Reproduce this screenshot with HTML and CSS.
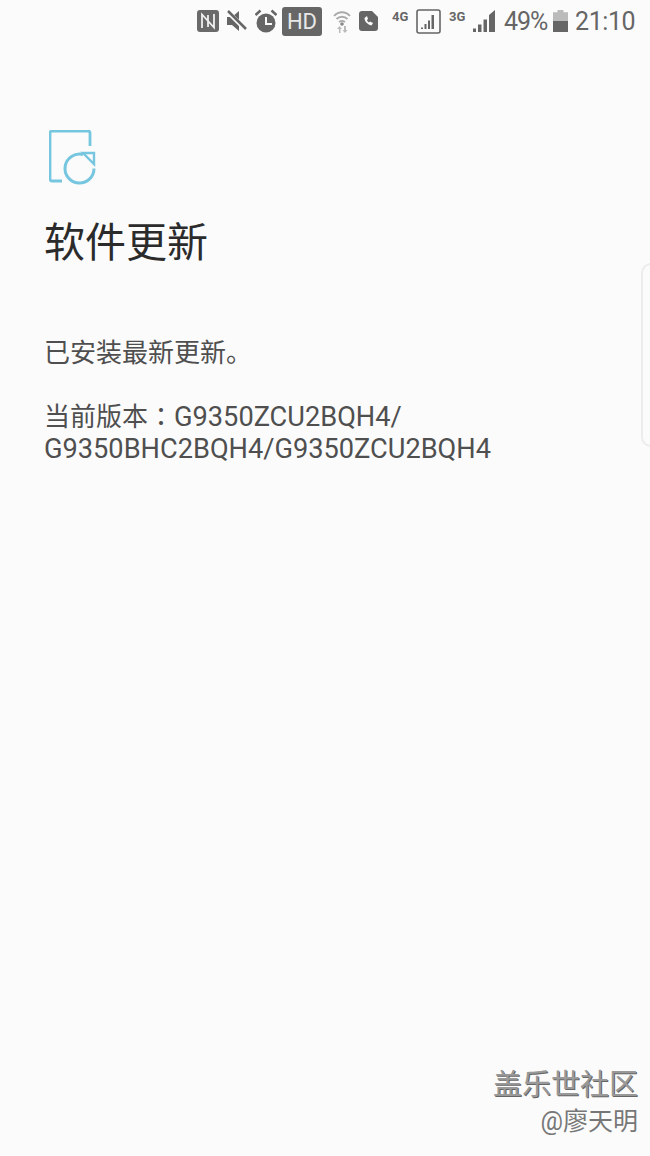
FILE: index.html
```html
<!DOCTYPE html>
<html lang="zh-CN">
<head>
  <meta name="viewport" content="width=device-width, initial-scale=1.0" />
  <title>软件更新</title>
  <link rel="stylesheet" href="styles.css">
</head>
<body>
  <div class="screen">
    <!-- Status bar -->
    <div class="status-bar">
      <svg class="ic ic-nfc" width="22" height="22" viewBox="0 0 22 22">
        <rect x="0" y="0" width="22" height="22" rx="3" fill="#6a6a6a"/>
        <path d="M5 18V4.500L11 11V5M17 4v13.500L11 11v6" fill="none" stroke="#f0f0f0" stroke-width="1.800"/>
      </svg>
      <svg class="ic ic-mute" width="20" height="22" viewBox="0 0 20 22">
        <path d="M0 7h5l7-6v20l-7-6H0z" fill="#666"/>
        <path d="M1 2l18 18" stroke="#fbfbfb" stroke-width="4.500"/>
        <path d="M1 1l18 18" stroke="#666" stroke-width="2.500"/>
      </svg>
      <svg class="ic ic-alarm" width="22" height="24" viewBox="0 0 22 24">
        <circle cx="11" cy="14" r="9.500" fill="#666"/>
        <path d="M0.500 6l5-4.500M21.500 6l-5-4.500" stroke="#666" stroke-width="2.500"/>
        <path d="M11 8v7h6" fill="none" stroke="#fbfbfb" stroke-width="2"/>
      </svg>
      <span class="hd">HD</span>
      <svg class="ic ic-wifi" width="18" height="23" viewBox="0 0 18 23">
        <path d="M1 6c4.500-5 11.500-5 16 0M3.500 9c3-3 8-3 11 0M6 12c2-1.500 4-1.500 6 0" fill="none" stroke="#aaa" stroke-width="1.800"/>
        <circle cx="9" cy="14" r="1.800" fill="#888"/>
        <path d="M6 23v-4H4l2.500-3 2.500 3H7.500v4zM11 16v4H9.500l2.500 3 2.500-3H13v-4z" fill="#bbb"/>
      </svg>
      <svg class="ic ic-call" width="19" height="20" viewBox="0 0 19 20">
        <path d="M3 0h10l6 6v11a3 3 0 0 1-3 3H3a3 3 0 0 1-3-3V3a3 3 0 0 1 3-3z" fill="#666"/>
        <path d="M5.500 7c0 3.500 3 6.500 7 7.500l1.500-2.500-3-1.500-1 1c-1-.5-1.800-1.500-2-2.500l1-1L8 5z" fill="#fbfbfb"/>
      </svg>
      <span class="net net-4g">4G</span>
      <svg class="ic ic-sim" width="25" height="25" viewBox="0 0 25 25">
        <rect x="1" y="1" width="23" height="23" rx="2" fill="none" stroke="#666" stroke-width="1.600"/>
        <path d="M5 18.500h2v1.500H5zM8.500 15h2v5h-2zM12 11.500h2V20h-2zM15.500 6h2.500v14h-2.500z" fill="#666"/>
      </svg>
      <span class="net net-3g">3G</span>
      <svg class="ic ic-signal" width="22" height="22" viewBox="0 0 22 22">
        <path d="M0 18.500h3V22H0zM5 14.500h3.500V22H5zM10.500 9.500H14V22h-3.500zM16 5l6-5v22h-6z" fill="#666"/>
      </svg>
      <span class="battery-text">49%</span>
      <span class="battery"><span class="battery-fill"></span></span>
      <span class="clock">21:10</span>
    </div>

    <!-- Page content -->
    <div class="content">
      <svg class="update-icon" width="48" height="56" viewBox="0 0 48 56">
        <path d="M13 51H3a2 2 0 0 1-2-2V3a2 2 0 0 1 2-2h36a2 2 0 0 1 2 2v13" fill="none" stroke="#77c6df" stroke-width="2.800"/>
        <path d="M34 24.500A14.500 14.500 0 1 0 45 38.500" fill="none" stroke="#77c6df" stroke-width="3"/>
        <path d="M34 23h11v11z" fill="none" stroke="#77c6df" stroke-width="2.400"/>
      </svg>
      <h1 class="title">软件更新</h1>
      <p class="installed">已安装最新更新。</p>
      <p class="version">当前版本<span class="colon" lang="zh-TW">：</span><span class="latin">G9350ZCU2BQH4/<br>G9350BHC2BQH4/G9350ZCU2BQH4</span></p>
    </div>

    <div class="side-handle"></div>

    <div class="watermark">
      <div class="wm-name">盖乐世社区</div>
      <div class="wm-user">@廖天明</div>
    </div>
  </div>
</body>
</html>
```

FILE: styles.css
```css
* {
  padding: 0;
  margin: 0;
  box-sizing: border-box;
}

body {
  background-color: #fbfbfb;
  font-family: "Roboto", "Noto Sans CJK SC", sans-serif;
}

.screen {
  position: relative;
  width: 650px;
  height: 1156px;
  overflow: hidden;
}

.status-bar {
  display: flex;
  justify-content: flex-end;
  align-items: center;
  height: 42px;
  padding-right: 15px;
  color: #666;
}

.ic {
  flex: none;
}

.ic-mute,
.ic-alarm,
.ic-call,
.net-3g,
.ic-signal {
  margin-left: 8px;
}

.ic-sim {
  margin-left: 6px;
}

.hd {
  margin-left: 5px;
  width: 40px;
  height: 29px;
  line-height: 29px;
  text-align: center;
  border-radius: 3px;
  background-color: #666;
  color: #e8e8e8;
  font-size: 22px;
}

.ic-wifi {
  margin-left: 11px;
}

.net {
  width: 18px;
  font-size: 13px;
  font-weight: 700;
  align-self: flex-start;
  margin-top: 9px;
  white-space: nowrap;
}

.net-4g {
  margin-left: 14px;
}

.net-3g {
  width: 16px;
}

.battery-text {
  width: 43px;
  margin-left: 9px;
  font-size: 25px;
  letter-spacing: -1px;
  white-space: nowrap;
}

.battery {
  width: 15px;
  height: 22px;
  margin-left: 6px;
  background-color: #bbb;
  clip-path: polygon(30% 0, 70% 0, 70% 10%, 100% 10%, 100% 100%, 0 100%, 0 10%, 30% 10%);
}

.battery-fill {
  display: block;
  height: 11px;
  margin-top: 11px;
  background-color: #666;
}

.clock {
  width: 60px;
  margin-left: 7px;
  font-size: 25px;
  letter-spacing: -0.4px;
  white-space: nowrap;
}

.content {
  padding: 88px 0 0 44px;
}

.update-icon {
  display: block;
  margin-left: 5px;
}

.title {
  margin-top: 27px;
  font-size: 41px;
  line-height: 60px;
  font-weight: 400;
  color: #2b2b2b;
}

.installed {
  margin-top: 62px;
  font-size: 26px;
  line-height: 36px;
  color: #4f4f4f;
}

.version {
  margin-top: 28px;
  font-size: 26px;
  line-height: 32px;
  color: #4f4f4f;
}

.colon {
  font-family: "Noto Sans CJK TC", sans-serif;
}

.latin {
  font-size: 27.200px;
}

.side-handle {
  position: absolute;
  top: 263px;
  right: -12px;
  width: 21px;
  height: 184px;
  border: 2px solid #ececec;
  border-radius: 10px;
}

.watermark {
  position: absolute;
  right: 12px;
  bottom: 16px;
  text-align: right;
}

.wm-name {
  font-size: 29px;
  line-height: 38px;
  color: #999;
  text-shadow: 1px 1px 0 #666;
}

.wm-user {
  font-size: 25px;
  line-height: 36px;
  color: #777;
}
```
